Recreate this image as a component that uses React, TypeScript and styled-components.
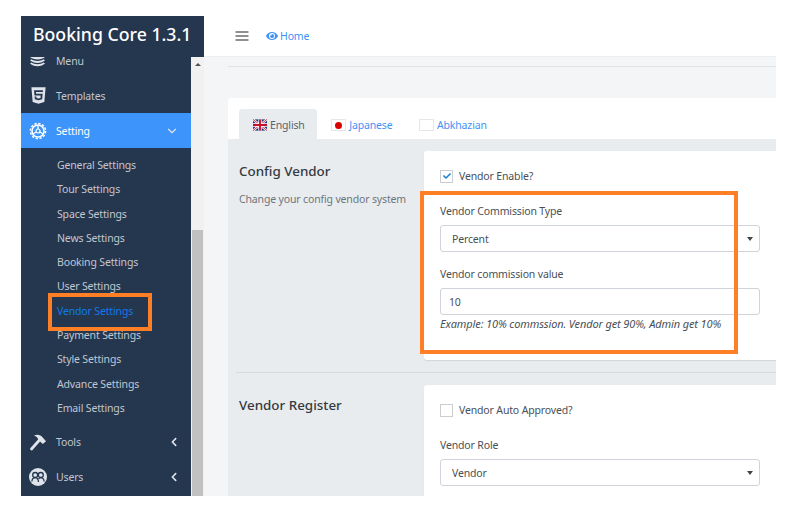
import React from 'react';
import styled, { createGlobalStyle } from 'styled-components';
import { FaHtml5, FaEye, FaChevronLeft, FaCheck } from 'react-icons/fa';
import { FiMenu, FiChevronDown } from 'react-icons/fi';

const GlobalStyle = createGlobalStyle`
  html, body {
    margin: 0;
    padding: 0;
    background: #fff;
  }
  body {
    font-family: "Noto Sans", "Open Sans", sans-serif;
    font-size: 10.5px;
    letter-spacing: -0.15px;
    color: #495057;
  }
`;

const Screen = styled.div`
  position: relative;
  width: 755px;
  height: 480px;
  margin: 16px 0 0 21px;
  display: flex;
  overflow: hidden;
`;

const Side = styled.aside`
  width: 183px;
  flex: none;
  display: flex;
  flex-direction: column;
`;

const Brand = styled.div`
  position: relative;
  z-index: 1;
  height: 41px;
  flex: none;
  background: #25364f;
  color: #fff;
  font-size: 17.7px;
  font-weight: 500;
  letter-spacing: 0;
  line-height: 37px;
  padding-left: 12px;
  white-space: nowrap;
`;

const SideBody = styled.div`
  flex: 1;
  min-height: 0;
  display: flex;
  overflow: hidden;
`;

const Nav = styled.nav`
  width: 170px;
  background: #25364f;
  overflow: hidden;
`;

const NavList = styled.div`
  margin-top: -14px;
`;

const NavItem = styled.div<{ $active?: boolean }>`
  height: 35px;
  display: flex;
  align-items: center;
  padding: 0 12px 0 8px;
  color: ${({ $active }) => ($active ? '#fff' : '#c2c7d0')};
  background: ${({ $active }) => ($active ? '#3d94fb' : 'transparent')};
`;

const NavIcon = styled.span`
  width: 27px;
  flex: none;
  display: flex;
  font-size: 19px;
  color: #dfe3ea;
  svg { display: block; }
`;

const NavActiveIcon = styled(NavIcon)`
  color: #fff;
`;

const NavLabel = styled.span`
  flex: 1;
`;

const NavCaret = styled.span`
  display: flex;
  font-size: 10px;
  color: #dfe3ea;
`;

const NavCaretOpen = styled(NavCaret)`
  font-size: 14px;
`;

const SubList = styled.div`
  padding: 5px 0 4px 36px;
`;

const SubItem = styled.div<{ $active?: boolean }>`
  height: 24.3px;
  line-height: 24.3px;
  color: ${({ $active }) => ($active ? '#0f7be8' : '#c2c7d0')};
`;

const Scrollbar = styled.div`
  width: 13px;
  box-sizing: border-box;
  padding: 0 1px;
  background: #f1f1f1;
  display: flex;
  flex-direction: column;
  align-items: center;
`;

const ScrollArrow = styled.div`
  margin-top: 6px;
  width: 0;
  height: 0;
  border-left: 3px solid transparent;
  border-right: 3px solid transparent;
  border-bottom: 3px solid #505050;
`;

const ScrollThumb = styled.div`
  margin-top: auto;
  width: 100%;
  height: 266px;
  background: #c1c1c1;
`;

const Main = styled.main`
  flex: 1;
  min-width: 0;
  display: flex;
  flex-direction: column;
  background: #f4f5f7;
`;

const TopBar = styled.header`
  height: 41px;
  flex: none;
  box-sizing: border-box;
  display: flex;
  align-items: center;
  gap: 16px;
  padding-left: 30px;
  background: #fff;
  border-bottom: 1px solid #eceef0;
`;

const Burger = styled.span`
  display: flex;
  font-size: 16px;
  color: #6c6c6c;
`;

const HomeLink = styled.a`
  display: flex;
  align-items: center;
  gap: 2px;
  color: #3f93f5;
  svg { font-size: 12px; }
`;

const Content = styled.div`
  flex: 1;
  min-height: 0;
  padding: 9px 0 0 24px;
`;

const TopRule = styled.div`
  height: 1px;
  background: #dfe2e6;
  margin-bottom: 31px;
`;

const Panel = styled.section`
  background: #fff;
  border-radius: 3px 0 0 0;
`;

const Tabs = styled.div`
  display: flex;
  padding: 11px 0 0 11px;
`;

const Tab = styled.div<{ $active?: boolean }>`
  height: 30px;
  box-sizing: border-box;
  display: flex;
  align-items: center;
  gap: 3px;
  padding: 2px 12.5px 0 14px;
  border-radius: 3px 3px 0 0;
  background: ${({ $active }) => ($active ? '#e9ecef' : 'transparent')};
  color: ${({ $active }) => ($active ? '#5b6269' : '#3f93f5')};
`;

const FlagBox = styled.span`
  box-sizing: border-box;
  width: 15px;
  height: 12px;
  display: flex;
  align-items: center;
  justify-content: center;
  border: 1px solid #e6e6e6;
  background: #fff;
`;

const JapanDot = styled.span`
  width: 7px;
  height: 7px;
  border-radius: 50%;
  background: #d80000;
`;

const Pane = styled.div`
  background: #e9ecef;
  padding: 12px 0 0 11px;
`;

const Section = styled.div`
  display: flex;
  color: #495057;
`;

const SectionInfo = styled.div`
  width: 185px;
  flex: none;
`;

const SectionTitle = styled.h3`
  margin: 11px 0 11px;
  font-size: 13.4px;
  letter-spacing: 0;
  line-height: 19px;
  font-weight: 500;
  color: #343a40;
`;

const SectionHint = styled.p`
  margin: 0;
  line-height: 15px;
  color: #6c757d;
`;

const Card = styled.div`
  flex: 1;
  box-sizing: border-box;
  background: #fff;
  border-radius: 3px 0 0 3px;
  box-shadow: 0 1px 1px rgba(0, 0, 0, 0.1);
  padding: 16px 16px 0;
`;

const CheckRow = styled.label`
  display: flex;
  align-items: center;
  gap: 6px;
  height: 18px;
  margin-bottom: 18.5px;
`;

const CheckBox = styled.span`
  box-sizing: border-box;
  width: 13px;
  height: 13px;
  display: flex;
  align-items: center;
  justify-content: center;
  border: 1px solid #c9ced3;
  background: #fff;
  color: #1580d0;
  font-size: 8px;
`;

const FieldLabel = styled.div`
  line-height: 15px;
  margin-bottom: 6px;
`;

const Control = styled.div`
  box-sizing: border-box;
  position: relative;
  width: 320px;
  height: 27px;
  line-height: 26px;
  border: 1px solid #ced4da;
  border-radius: 3px;
  background: #fff;
  color: #495057;
`;

const SelectControl = styled(Control)`
  padding-left: 11px;
  margin-bottom: 15px;
  &::after {
    content: '';
    position: absolute;
    right: 6px;
    top: 11px;
    border-left: 3px solid transparent;
    border-right: 3px solid transparent;
    border-top: 4px solid #444;
  }
`;

const InputControl = styled(Control)`
  padding-left: 8px;
`;

const Example = styled.div`
  margin-top: 1px;
  font-size: 11px;
  letter-spacing: -0.13px;
  line-height: 15px;
  font-style: italic;
  color: #495057;
  padding-bottom: 29.5px;
`;

const Rule = styled.div`
  height: 1px;
  background: #d6d9dc;
  margin: 12px 0 12px -3px;
`;

const Callout = styled.div<{ $x: number; $y: number; $w: number; $h: number }>`
  position: absolute;
  box-sizing: border-box;
  left: ${({ $x }) => $x}px;
  top: ${({ $y }) => $y}px;
  width: ${({ $w }) => $w}px;
  height: ${({ $h }) => $h}px;
  border: 4px solid #ff7f27;
  z-index: 2;
`;

const LayersIcon = () => (
  <svg width="17" height="17" viewBox="0 0 17 17" fill="currentColor">
    <path d="M8.500 2.500c3 0 6 1.200 7.500 2.500-1.500 1.300-4.500 2.500-7.500 2.500S2.500 6.300 1 5c1.500-1.300 4.500-2.500 7.500-2.500z" />
    <path d="M1 8.200l1.400-.9c1.600 1 3.800 1.700 6.100 1.700s4.500-.7 6.100-1.700l1.400.9c-1.500 1.500-4.500 2.800-7.500 2.800S2.500 9.700 1 8.200z" />
    <path d="M1 11.400l1.400-.9c1.600 1 3.800 1.700 6.100 1.700s4.500-.7 6.100-1.700l1.400.9c-1.500 1.500-4.500 2.800-7.500 2.800S2.500 12.900 1 11.400z" />
  </svg>
);

const GearIcon = () => (
  <svg width="18" height="18" viewBox="0 0 18 18" fill="none" stroke="currentColor">
    <circle cx="9" cy="9" r="7.600" strokeWidth="1.500" strokeDasharray="2.400 1.580" />
    <circle cx="9" cy="9" r="6" strokeWidth="1.600" />
    <circle cx="9" cy="9" r="2" strokeWidth="1.200" />
    <path d="M9 7V3.500M10.700 10l3.100 1.800M7.300 10l-3.100 1.800" strokeWidth="1.300" />
  </svg>
);

const HammerIcon = () => (
  <svg width="18" height="18" viewBox="0 0 18 18" fill="currentColor">
    <path d="M2.500 16L10.500 7" stroke="currentColor" strokeWidth="2.800" strokeLinecap="round" />
    <path d="M5 2.500C8 .8 12 1.700 13.500 4.200L17 8.300l-3.200 2.700L10 7.500 8.300 4.800C7.600 3.800 6.500 3.200 5 2.500z" />
  </svg>
);

const UsersIcon = () => (
  <svg width="18" height="18" viewBox="0 0 18 18" fill="none">
    <circle cx="9" cy="9" r="9" fill="currentColor" />
    <g stroke="#25364f" strokeWidth="1.300">
      <circle cx="6.200" cy="7" r="2.500" />
      <circle cx="11.800" cy="7" r="2.500" />
      <path d="M2.800 13.500c.4-2.600 1.700-3.800 3.400-3.800s3 1.200 3.300 4.300" />
      <path d="M9.600 11c.5-.9 1.200-1.300 2.200-1.300 1.700 0 3 1.200 3.400 3.800" />
    </g>
  </svg>
);

const UkFlag = () => (
  <svg width="14" height="12" viewBox="0 0 15 12">
    <rect width="15" height="12" fill="#1f3a7a" />
    <path d="M0 0l15 12M15 0L0 12" stroke="#fff" strokeWidth="2.400" />
    <path d="M0 0l15 12M15 0L0 12" stroke="#c8102e" strokeWidth="0.9" />
    <path d="M7.500 0v12M0 6h15" stroke="#fff" strokeWidth="3.600" />
    <path d="M7.500 0v12M0 6h15" stroke="#c8102e" strokeWidth="2" />
  </svg>
);

const settings = [
  'General Settings',
  'Tour Settings',
  'Space Settings',
  'News Settings',
  'Booking Settings',
  'User Settings',
  'Vendor Settings',
  'Payment Settings',
  'Style Settings',
  'Advance Settings',
  'Email Settings',
];

export default function App() {
  return (
    <>
      <GlobalStyle />
      <Screen>
        <Side>
          <Brand>Booking Core 1.3.1</Brand>
          <SideBody>
            <Nav>
              <NavList>
                <NavItem>
                  <NavIcon><LayersIcon /></NavIcon>
                  <NavLabel>Menu</NavLabel>
                </NavItem>
                <NavItem>
                  <NavIcon><FaHtml5 /></NavIcon>
                  <NavLabel>Templates</NavLabel>
                </NavItem>
                <NavItem $active>
                  <NavActiveIcon><GearIcon /></NavActiveIcon>
                  <NavLabel>Setting</NavLabel>
                  <NavCaretOpen><FiChevronDown /></NavCaretOpen>
                </NavItem>
                <SubList>
                  {settings.map((name) => (
                    <SubItem key={name} $active={name === 'Vendor Settings'}>{name}</SubItem>
                  ))}
                </SubList>
                <NavItem>
                  <NavIcon><HammerIcon /></NavIcon>
                  <NavLabel>Tools</NavLabel>
                  <NavCaret><FaChevronLeft /></NavCaret>
                </NavItem>
                <NavItem>
                  <NavIcon><UsersIcon /></NavIcon>
                  <NavLabel>Users</NavLabel>
                  <NavCaret><FaChevronLeft /></NavCaret>
                </NavItem>
              </NavList>
            </Nav>
            <Scrollbar>
              <ScrollArrow />
              <ScrollThumb />
            </Scrollbar>
          </SideBody>
        </Side>
        <Main>
          <TopBar>
            <Burger><FiMenu /></Burger>
            <HomeLink><FaEye /> Home</HomeLink>
          </TopBar>
          <Content>
            <TopRule />
            <Panel>
              <Tabs>
                <Tab $active><UkFlag /> English</Tab>
                <Tab><FlagBox><JapanDot /></FlagBox> Japanese</Tab>
                <Tab><FlagBox /> Abkhazian</Tab>
              </Tabs>
              <Pane>
                <Section>
                  <SectionInfo>
                    <SectionTitle>Config Vendor</SectionTitle>
                    <SectionHint>Change your config vendor system</SectionHint>
                  </SectionInfo>
                  <Card>
                    <CheckRow>
                      <CheckBox><FaCheck /></CheckBox>
                      Vendor Enable?
                    </CheckRow>
                    <FieldLabel>Vendor Commission Type</FieldLabel>
                    <SelectControl>Percent</SelectControl>
                    <FieldLabel>Vendor commission value</FieldLabel>
                    <InputControl>10</InputControl>
                    <Example>Example: 10% commssion. Vendor get 90%, Admin get 10%</Example>
                  </Card>
                </Section>
                <Rule />
                <Section>
                  <SectionInfo>
                    <SectionTitle>Vendor Register</SectionTitle>
                  </SectionInfo>
                  <Card>
                    <CheckRow>
                      <CheckBox />
                      Vendor Auto Approved?
                    </CheckRow>
                    <FieldLabel>Vendor Role</FieldLabel>
                    <SelectControl>Vendor</SelectControl>
                  </Card>
                </Section>
              </Pane>
            </Panel>
          </Content>
        </Main>
        <Callout $x={27} $y={277} $w={104} $h={38} />
        <Callout $x={399} $y={175} $w={318} $h={163} />
      </Screen>
    </>
  );
}
